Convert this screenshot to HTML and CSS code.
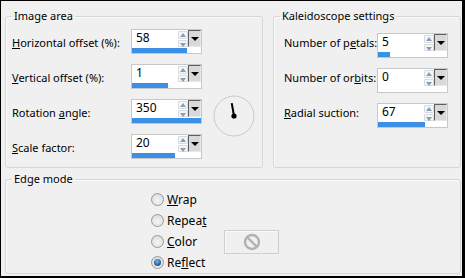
FILE: index.html
```html
<!DOCTYPE html>
<html lang="en">
<head>
  <meta charset="UTF-8" />
  <title>Kaleidoscope</title>
  <link rel="stylesheet" href="styles.css">
</head>
<body>
  <div class="window">
    <div class="top">

      <!-- IMAGE AREA -->
      <fieldset class="group image-area">
        <legend>Image area</legend>
        <div class="rows">
          <label class="lbl"><u>H</u>orizontal offset (%):</label>
          <div class="spin">
            <div class="spin-field">
              <span class="spin-value">58</span>
              <span class="spin-arrows"><i class="up"></i><i class="down"></i></span>
              <span class="spin-drop"></span>
            </div>
            <div class="spin-bar"><span style="width:55px"></span></div>
          </div>

          <label class="lbl"><u>V</u>ertical offset (%):</label>
          <div class="spin">
            <div class="spin-field">
              <span class="spin-value">1</span>
              <span class="spin-arrows"><i class="up"></i><i class="down"></i></span>
              <span class="spin-drop"></span>
            </div>
            <div class="spin-bar"><span style="width:36px"></span></div>
          </div>

          <div class="dial">
            <svg width="42" height="42" viewBox="0 0 42 42">
              <circle cx="21" cy="21" r="20" fill="none" stroke="#cacaca" stroke-width="1"/>
              <g transform="rotate(-10 21 21)">
                <line x1="21" y1="21" x2="21" y2="8" stroke="#000" stroke-width="2"/>
              </g>
              <circle cx="21" cy="21" r="2.6" fill="#000"/>
            </svg>
          </div>

          <label class="lbl">Rotation <u>a</u>ngle:</label>
          <div class="spin">
            <div class="spin-field">
              <span class="spin-value">350</span>
              <span class="spin-arrows"><i class="up"></i><i class="down"></i></span>
              <span class="spin-drop"></span>
            </div>
            <div class="spin-bar"><span style="width:69px"></span></div>
          </div>

          <label class="lbl"><u>S</u>cale factor:</label>
          <div class="spin">
            <div class="spin-field">
              <span class="spin-value">20</span>
              <span class="spin-arrows"><i class="up"></i><i class="down"></i></span>
              <span class="spin-drop"></span>
            </div>
            <div class="spin-bar"><span style="width:43px"></span></div>
          </div>
        </div>
      </fieldset>

      <!-- KALEIDOSCOPE SETTINGS -->
      <fieldset class="group kaleido">
        <legend>Kaleidoscope settings</legend>
        <div class="rows">
          <label class="lbl">Number of p<u>e</u>tals:</label>
          <div class="spin">
            <div class="spin-field">
              <span class="spin-value">5</span>
              <span class="spin-arrows"><i class="up"></i><i class="down"></i></span>
              <span class="spin-drop"></span>
            </div>
            <div class="spin-bar"><span style="width:12px"></span></div>
          </div>

          <label class="lbl">Number of or<u>b</u>its:</label>
          <div class="spin">
            <div class="spin-field">
              <span class="spin-value">0</span>
              <span class="spin-arrows"><i class="up"></i><i class="down"></i></span>
              <span class="spin-drop"></span>
            </div>
            <div class="spin-bar"><span style="width:0px"></span></div>
          </div>

          <label class="lbl"><u>R</u>adial suction:</label>
          <div class="spin">
            <div class="spin-field">
              <span class="spin-value">67</span>
              <span class="spin-arrows"><i class="up"></i><i class="down"></i></span>
              <span class="spin-drop"></span>
            </div>
            <div class="spin-bar"><span style="width:47px"></span></div>
          </div>
        </div>
      </fieldset>
    </div>

    <!-- EDGE MODE -->
    <fieldset class="group edge">
      <legend>Edge mode</legend>
      <div class="radios">
        <div class="radio"><span class="dot"></span><span><u>W</u>rap</span></div>
        <div class="radio"><span class="dot"></span><span>Repea<u>t</u></span></div>
        <div class="radio"><span class="dot"></span><span><u>C</u>olor</span></div>
        <div class="swatch">
          <svg width="18" height="18" viewBox="0 0 18 18">
            <circle cx="9" cy="9" r="7" fill="none" stroke="#b2b2b2" stroke-width="2.4"/>
            <line x1="4" y1="4" x2="14" y2="14" stroke="#b2b2b2" stroke-width="2.4"/>
          </svg>
        </div>
        <div class="radio"><span class="dot on"></span><span>Re<u>f</u>lect</span></div>
      </div>
    </fieldset>
  </div>
</body>
</html>
```

FILE: styles.css
```css
/* ---------- WINDOW ---------- */
*{box-sizing:border-box;}
html,body{margin:0;padding:0;background:#000;}
u{text-decoration:underline;text-underline-offset:1px;}

.window{
  width:465px;height:278px;
  border-style:solid;border-color:#000;border-width:1px 3px 2px 1px;
  background:#f0f0f0;
  padding:8px 1px 2px 4px;
  display:flex;flex-direction:column;
  font:11px "Noto Sans",sans-serif;
  color:#000;
}

/* ---------- GROUP BOXES ---------- */
.group{
  margin:0;
  padding:0 6px 0 6px;
  border:1px solid #d6d6d6;
  border-radius:3px;
  box-shadow:inset 1px 1px 0 #fbfbfb;
  min-width:0;
}
.group legend{padding:0 2px;line-height:14px;}

.top{display:flex;gap:10px;height:160px;}
.image-area{width:258px;}
.kaleido{flex:1;}

/* ---------- ROWS ---------- */
.rows{display:grid;row-gap:10px;align-items:center;}
.image-area .rows{
  grid-template-columns:119px 71px 1fr;
  padding-top:6px;
}
.kaleido .rows{
  grid-template-columns:93px 71px;
  padding:10px 0 0 4px;
}
.lbl{grid-column:1;padding-top:3px;line-height:14px;white-space:nowrap;}
.kaleido .lbl{align-self:start;}
.spin{grid-column:2;}
.dial{
  grid-column:3;grid-row:2 / span 3;
  align-self:center;
  margin:8px 0 0 11px;
  width:42px;height:42px;
}
.dial svg{display:block;}

/* ---------- SPIN CONTROL ---------- */
.spin{
  width:71px;height:25px;
  border:1px solid #c8c8c8;
  background:#fff;
  display:flex;flex-direction:column;
}
.spin-field{display:flex;height:18px;}
.spin-value{flex:1;padding:1px 0 0 4px;line-height:14px;font-size:12px;}
.spin-arrows{
  width:10px;display:flex;flex-direction:column;gap:1px;
  padding-top:1px;
}
.spin-arrows i{
  flex:1;position:relative;
  border:1px solid #d5dbe1;border-radius:1px;
  background:#f4f6f8;
}
.spin-arrows i::after{
  content:'';position:absolute;left:1px;
  border-left:3px solid transparent;border-right:3px solid transparent;
}
.spin-arrows .up::after{top:1px;border-bottom:4px solid #8c9db2;}
.spin-arrows .down::after{top:2px;border-top:4px solid #8c9db2;}
.spin-drop{
  width:13px;position:relative;
  background:#d9d9d9;
  border:1px solid #5f5f5f;border-right-color:#e8e8e8;border-bottom-color:#e8e8e8;
}
.spin-drop::after{
  content:'';position:absolute;left:2px;top:6px;
  border-left:4px solid transparent;border-right:4px solid transparent;
  border-top:4px solid #000;
}
.spin-bar{height:5px;margin-top:1px;}
.spin-bar span{display:block;height:100%;background:#3b8fe4;}

/* ---------- EDGE MODE ---------- */
.edge{flex:1;margin-top:4px;}
.radios{
  display:grid;
  grid-template-columns:73px auto;
  grid-auto-rows:21px;
  padding:3px 0 0 139px;
}
.radio{
  grid-column:1;
  display:flex;align-items:center;gap:3px;
  white-space:nowrap;line-height:14px;font-size:12px;
}
.dot{
  width:13px;height:13px;border-radius:50%;
  border:1px solid #9a9a9a;
  background:radial-gradient(circle at 50% 60%,#f6f6f6 0%,#e2e2e2 60%,#d0d0d0 100%);
  display:flex;align-items:center;justify-content:center;
}
.dot.on::after{
  content:'';width:7px;height:7px;border-radius:50%;
  background:radial-gradient(circle at 45% 35%,#7ab8e8 0%,#2a6aa3 55%,#143f66 100%);
}
.swatch{
  grid-column:2;grid-row:3;
  align-self:center;
  width:55px;height:24px;
  border:1px solid #cfcfcf;
  box-shadow:inset 1px 1px 0 #fafafa;
  display:flex;align-items:center;justify-content:center;
}
```
